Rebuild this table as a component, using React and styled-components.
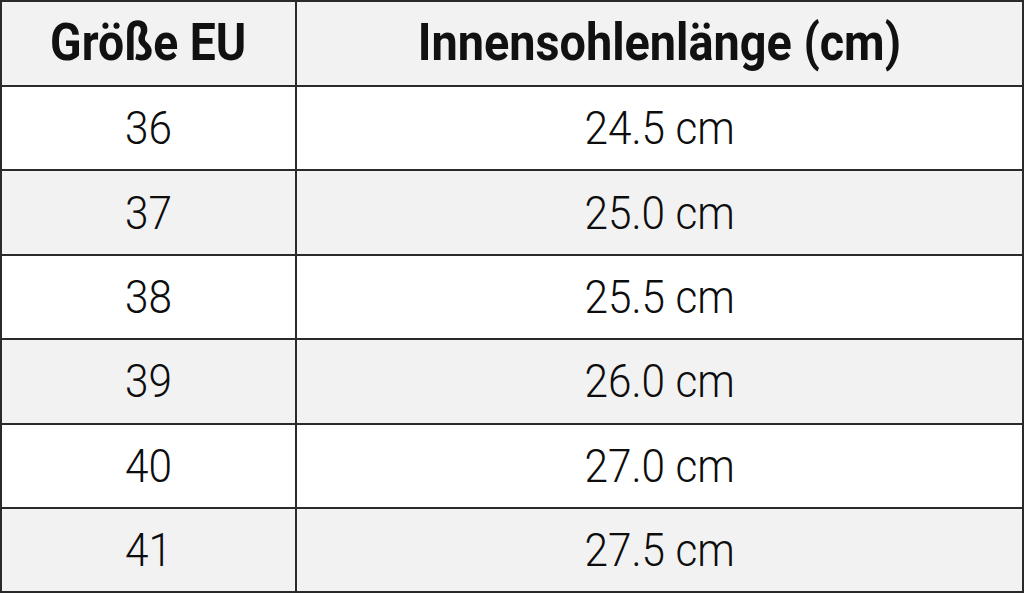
import React from "react";
import styled, { createGlobalStyle } from "styled-components";

const Global = createGlobalStyle`
  html, body { margin: 0; padding: 0; background: #ffffff; }
  body { font-family: Roboto, "Noto Sans", "Liberation Sans", sans-serif; color: #111; }
`;

const Table = styled.table`
  width: 1022px;
  border-collapse: collapse;
  border: 2px solid #2a2a2a;
  table-layout: fixed;
`;

const Col = styled.col`
  width: ${(p) => p.$w}px;
`;

const HeadRow = styled.tr`
  height: 85px;
  background: #f2f2f2;
`;

const HeadCell = styled.th`
  border: 2px solid #2a2a2a;
  font-weight: 700;
  font-size: 52px;
  text-align: center;
  vertical-align: middle;
  padding: 0 0 2px;
  line-height: 1;
`;

const Row = styled.tr`
  height: 84.4px;
  background: ${(p) => (p.$shade ? "#f2f2f2" : "#ffffff")};
`;

const Cell = styled.td`
  border: 2px solid #2a2a2a;
  font-size: 46px;
  font-weight: 300;
  text-align: center;
  vertical-align: middle;
  padding: 0;
  line-height: 1;
  color: #0d0d0d;
`;

const Narrow = styled.span`
  display: inline-block;
  transform: scaleX(${(p) => p.$sx});
  white-space: nowrap;
`;

const rows = [
  ["36", "24.5 cm"],
  ["37", "25.0 cm"],
  ["38", "25.5 cm"],
  ["39", "26.0 cm"],
  ["40", "27.0 cm"],
  ["41", "27.5 cm"],
];

export default function App() {
  return (
    <>
      <Global />
      <Table>
        <colgroup>
          <Col $w={295} />
          <Col $w={727} />
        </colgroup>
        <thead>
          <HeadRow>
            <HeadCell><Narrow $sx={0.89}>Größe EU</Narrow></HeadCell>
            <HeadCell><Narrow $sx={0.9}>Innensohlenlänge (cm)</Narrow></HeadCell>
          </HeadRow>
        </thead>
        <tbody>
          {rows.map(([eu, cm], i) => (
            <Row key={eu} $shade={i % 2 === 1}>
              <Cell><Narrow $sx={0.92}>{eu}</Narrow></Cell>
              <Cell><Narrow $sx={0.92}>{cm}</Narrow></Cell>
            </Row>
          ))}
        </tbody>
      </Table>
    </>
  );
}
